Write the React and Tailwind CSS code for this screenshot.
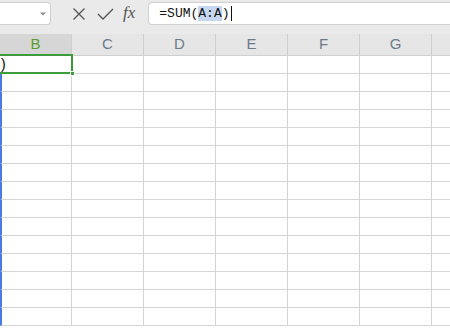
import React from 'react';

const cols = ['B', 'C', 'D', 'E', 'F', 'G'];
const rows = Array.from({ length: 15 });

const App = () => {
  return (
    <div className="w-[450px] h-[330px] overflow-hidden bg-white relative" style={{ fontFamily: '"Liberation Sans", Arial, sans-serif' }}>
      {/* Formula bar */}
      <div className="h-[34px] bg-[#eaeaea] flex items-start pt-[2px]">
        <div className="w-[51px] h-[23px] bg-white border border-[#d0d0d0] border-l-0 rounded-r-[4px] flex items-center justify-end pr-[4px]">
          <svg width="6" height="4" viewBox="0 0 6 4">
            <path d="M0 0.5 L3 3.5 L6 0.5 Z" fill="#8a8a8a" />
          </svg>
        </div>
        <div className="flex items-center h-[23px] ml-[21px]">
          <svg width="14" height="14" viewBox="0 0 14 14">
            <path d="M1.5 1.5 L12.5 12.5 M12.5 1.5 L1.5 12.5" stroke="#555" strokeWidth="1.3" fill="none" />
          </svg>
          <svg width="17" height="14" viewBox="0 0 17 14" className="ml-[11px]">
            <path d="M1 7 L6 12 L16 2" stroke="#555" strokeWidth="1.4" fill="none" />
          </svg>
          <span className="ml-[9px] text-[17px] italic text-[#555] leading-none -mt-[2px]" style={{ fontFamily: '"Liberation Serif", serif' }}>fx</span>
        </div>
        <div className="ml-[13px] flex-1 h-[23px] bg-white border border-[#d0d0d0] border-r-0 rounded-l-[4px] flex items-center pl-[10px]">
          <span className="text-[13px] text-[#111] leading-none" style={{ fontFamily: '"Liberation Mono", monospace' }}>
            =SUM(<span className="bg-[#c6d7f1]">A:A</span>)
          </span>
          <span className="w-px h-[15px] bg-[#111] ml-[1px]" />
        </div>
      </div>

      {/* Column headers */}
      <div className="flex h-[22px] bg-[#e6e6e6] border-b border-[#cfcfcf]">
        {cols.map((c) => (
          <div
            key={c}
            className={`w-[72px] shrink-0 border-r border-[#cfcfcf] flex items-center justify-center text-[15px] ${c === 'B' ? 'bg-[#d6d6d6] text-[#5a9e2e]' : 'text-[#6c7a8a]'}`}
          >
            {c}
          </div>
        ))}
        <div className="flex-1" />
      </div>

      {/* Grid */}
      <div>
        {rows.map((_, i) => (
          <div key={i} className={`flex h-[18px] border-b border-[#d4d4d4] ${i > 0 ? 'border-l-2 border-l-[#4a7be0]' : ''}`}>
            {cols.map((c, j) => (
              <div
                key={c}
                className={`${j === 0 && i > 0 ? 'w-[70px]' : 'w-[72px]'} shrink-0 border-r border-[#d4d4d4] text-[14px] leading-[17px] pl-[1px] text-black`}
              >
                {i === 0 && j === 0 ? ')' : ''}
              </div>
            ))}
            <div className="flex-1" />
          </div>
        ))}
      </div>

      {/* Active cell */}
      <div className="absolute left-[-2px] top-[54px] w-[75px] h-[20px] border-2 border-[#3c9c3c]" />
      <div className="absolute left-[70px] top-[71px] w-[5px] h-[5px] bg-[#3c9c3c] border border-white" />
    </div>
  );
};

export default App;
